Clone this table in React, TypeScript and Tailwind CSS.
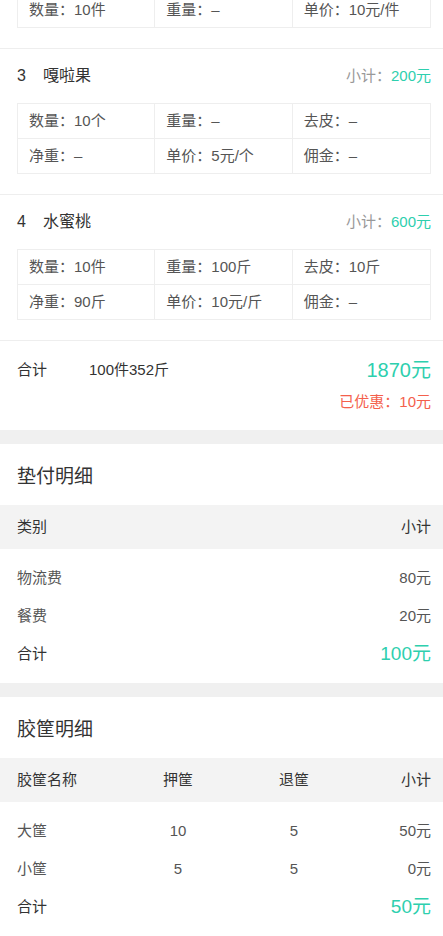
import React from "react";

const GREEN = "text-[#2ecfae]";

function Cell({ text, last }: { text: string; last?: boolean }) {
  return (
    <div
      className={
        "h-[34px] flex items-center pl-[11px] text-[15px] text-[#555] " +
        (last ? "" : "border-r border-[#eeeeee]")
      }
    >
      {text}
    </div>
  );
}

function InfoTable({ rows }: { rows: string[][] }) {
  return (
    <div className="ml-[17px] mr-[12px] border border-[#eeeeee]">
      {rows.map((r, i) => (
        <div
          key={i}
          className={
            "grid grid-cols-3 " + (i < rows.length - 1 ? "border-b border-[#eeeeee]" : "")
          }
        >
          {r.map((t, j) => (
            <Cell key={j} text={t} last={j === r.length - 1} />
          ))}
        </div>
      ))}
    </div>
  );
}

function Item({ no, name, sub, rows }: { no: string; name: string; sub: string; rows: string[][] }) {
  return (
    <div className="border-t border-[#eeeeee] pb-[20px]">
      <div className="h-[54px] flex items-center justify-between pl-[17px] pr-[12px]">
        <div className="flex items-center gap-[17px] text-[16px] text-[#333]">
          <span>{no}</span>
          <span>{name}</span>
        </div>
        <div className="text-[15px]">
          <span className="text-[#999]">小计：</span>
          <span className={GREEN}>{sub}</span>
        </div>
      </div>
      <InfoTable rows={rows} />
    </div>
  );
}

export default function App() {
  return (
    <div className="w-[443px] h-[936px] overflow-hidden bg-white font-['Liberation_Sans','Noto_Sans_CJK_SC',sans-serif]">
      {/* partial first item */}
      <div className="pb-[20px] -mt-[7px]">
        <div className="ml-[17px] mr-[12px] border-x border-b border-[#eeeeee] grid grid-cols-3">
          <Cell text="数量：10件" />
          <Cell text="重量：–" />
          <Cell text="单价：10元/件" last />
        </div>
      </div>

      <Item
        no="3"
        name="嘎啦果"
        sub="200元"
        rows={[
          ["数量：10个", "重量：–", "去皮：–"],
          ["净重：–", "单价：5元/个", "佣金：–"],
        ]}
      />
      <Item
        no="4"
        name="水蜜桃"
        sub="600元"
        rows={[
          ["数量：10件", "重量：100斤", "去皮：10斤"],
          ["净重：90斤", "单价：10元/斤", "佣金：–"],
        ]}
      />

      {/* total */}
      <div className="border-t border-[#eeeeee] pl-[17px] pr-[12px] pt-[17px] pb-[18px]">
        <div className="h-[24px] flex items-center">
          <span className="w-[72px] text-[15px] text-[#333]">合计</span>
          <span className="text-[15px] text-[#333]">100件352斤</span>
          <span className={"ml-auto text-[20px] " + GREEN}>1870元</span>
        </div>
        <div className="h-[20px] mt-[10px] flex items-center justify-end text-[15px] text-[#f4604c]">
          已优惠：10元
        </div>
      </div>

      <div className="h-[14px] bg-[#f0f0f0]" />

      {/* 垫付明细 */}
      <div className="h-[61px] flex items-center pt-[6px] pl-[17px] pr-[12px] text-[19px] text-[#333]">垫付明细</div>
      <div className="h-[44px] bg-[#f3f3f3] flex items-center justify-between pl-[17px] pr-[12px] text-[15px] text-[#333]">
        <span>类别</span>
        <span>小计</span>
      </div>
      <div className="pl-[17px] pr-[12px] py-[10px]">
        <div className="h-[38px] flex items-center justify-between text-[15px] text-[#555]">
          <span>物流费</span>
          <span>80元</span>
        </div>
        <div className="h-[38px] flex items-center justify-between text-[15px] text-[#555]">
          <span>餐费</span>
          <span>20元</span>
        </div>
        <div className="h-[38px] flex items-center justify-between">
          <span className="text-[15px] text-[#333]">合计</span>
          <span className={"text-[19px] " + GREEN}>100元</span>
        </div>
      </div>

      <div className="h-[14px] bg-[#f0f0f0]" />

      {/* 胶筐明细 */}
      <div className="h-[61px] flex items-center pt-[6px] pl-[17px] pr-[12px] text-[19px] text-[#333]">胶筐明细</div>
      <div className="h-[44px] bg-[#f3f3f3] grid grid-cols-[103px_116px_116px_1fr] items-center pl-[17px] pr-[12px] text-[15px] text-[#333]">
        <span>胶筐名称</span>
        <span className="text-center">押筐</span>
        <span className="text-center">退筐</span>
        <span className="text-right">小计</span>
      </div>
      <div className="pl-[17px] pr-[12px] py-[10px]">
        {[
          ["大筐", "10", "5", "50元"],
          ["小筐", "5", "5", "0元"],
        ].map((r, i) => (
          <div
            key={i}
            className="h-[38px] grid grid-cols-[103px_116px_116px_1fr] items-center text-[15px] text-[#555]"
          >
            <span>{r[0]}</span>
            <span className="text-center">{r[1]}</span>
            <span className="text-center">{r[2]}</span>
            <span className="text-right">{r[3]}</span>
          </div>
        ))}
        <div className="h-[38px] flex items-center justify-between">
          <span className="text-[15px] text-[#333]">合计</span>
          <span className={"text-[19px] " + GREEN}>50元</span>
        </div>
      </div>
    </div>
  );
}
